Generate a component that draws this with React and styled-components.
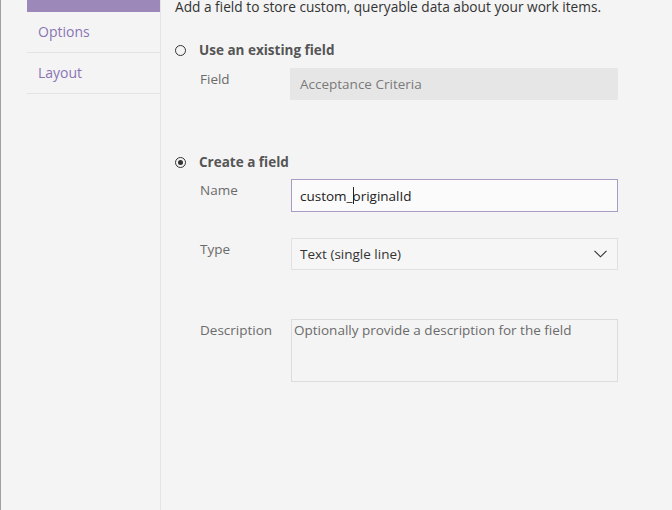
import React from "react";
import styled, {createGlobalStyle} from "styled-components";

const GlobalStyle = createGlobalStyle`
    html, body {
        margin: 0;
        padding: 0;
        background: #f4f4f4;
    }
    body {
        font-family: "Open Sans", "Noto Sans", sans-serif;
        font-size: 13px;
        color: #333333;
    }
`;

const navItems = [
    {label: "Fields", active: true},
    {label: "Options"},
    {label: "Layout"},
];

const ChevronDown = () => (
    <svg width="13" height="8" viewBox="0 0 13 8">
        <polyline points="0.5,0.8 6.5,6.8 12.5,0.8" fill="none" stroke="#333333" strokeWidth="1.1"/>
    </svg>
);

const App = () => {
    return <Page>
        <GlobalStyle/>
        <Nav>
            <NavList>
                {navItems.map((item) => (
                    <NavItem key={item.label} $active={item.active}>{item.label}</NavItem>
                ))}
            </NavList>
        </Nav>
        <Content>
            <Intro>Add a field to store custom, queryable data about your work items.</Intro>

            <RadioRow $gap={23}>
                <Radio/>
                <RadioLabel>Use an existing field</RadioLabel>
            </RadioRow>
            <FieldRow $gap={8}>
                <Label>Field</Label>
                <DisabledBox>Acceptance Criteria</DisabledBox>
            </FieldRow>

            <RadioRow $gap={52}>
                <Radio $checked/>
                <RadioLabel>Create a field</RadioLabel>
            </RadioRow>
            <FieldRow $gap={7}>
                <Label>Name</Label>
                <TextBox>custom_<Caret/>originalId</TextBox>
            </FieldRow>
            <FieldRow $gap={26}>
                <Label>Type</Label>
                <Select>
                    <span>Text (single line)</span>
                    <ChevronDown/>
                </Select>
            </FieldRow>
            <FieldRow $gap={49}>
                <Label>Description</Label>
                <TextArea placeholder="Optionally provide a description for the field"/>
            </FieldRow>
        </Content>
    </Page>
}

const Page = styled.div`
    display: flex;
    height: 510px;
    overflow: hidden;
    border-left: 1px solid #a0a0a0;
    box-sizing: border-box;
`;

const Nav = styled.div`
    width: 160px;
    flex-shrink: 0;
    padding-left: 26px;
    box-sizing: border-box;
    border-right: 1px solid #e4e4e4;
`;

const NavList = styled.div`
    margin-top: -29px;
    display: flex;
    flex-direction: column;
`;

const NavItem = styled.div`
    height: 40px;
    line-height: 40px;
    padding-left: 11px;
    font-size: 14px;
    color: ${(p) => (p.$active ? "#ffffff" : "#8a75b4")};
    background: ${(p) => (p.$active ? "#9c89b9" : "transparent")};
    border-bottom: 1px solid ${(p) => (p.$active ? "#9c89b9" : "#e3e3e3")};
`;

const Content = styled.div`
    flex: 1;
    padding-left: 14px;
    display: flex;
    flex-direction: column;
`;

const Intro = styled.div`
    margin-top: -3px;
    line-height: 20px;
    font-size: 13.7px;
    color: #333333;
`;

const RadioRow = styled.div`
    margin-top: ${(p) => p.$gap}px;
    height: 20px;
    display: flex;
    align-items: center;
    gap: 13px;
`;

const Radio = styled.span`
    width: 11px;
    height: 11px;
    border-radius: 50%;
    border: 1.4px solid #333333;
    box-sizing: border-box;
    display: flex;
    align-items: center;
    justify-content: center;
    &::after {
        content: "";
        display: ${(p) => (p.$checked ? "block" : "none")};
        width: 5px;
        height: 5px;
        border-radius: 50%;
        background: #333333;
    }
`;

const RadioLabel = styled.span`
    font-weight: 700;
    font-size: 13.5px;
    color: #555555;
`;

const FieldRow = styled.div`
    margin-top: ${(p) => p.$gap}px;
    display: flex;
    align-items: flex-start;
    padding-left: 25px;
`;

const Label = styled.div`
    width: 90px;
    flex-shrink: 0;
    padding-top: 1px;
    line-height: 20px;
    font-size: 13.5px;
    color: #6b6b6b;
`;

const BoxBase = styled.div`
    width: 328px;
    height: 32px;
    box-sizing: border-box;
    display: flex;
    align-items: center;
    padding: 0 9px;
    font-size: 13.5px;
`;

const DisabledBox = styled(BoxBase)`
    background: #e6e6e6;
    color: #7a7a7a;
    padding-left: 10px;
`;

const TextBox = styled(BoxBase)`
    height: 33px;
    margin-left: 1px;
    width: 327px;
    background: #fbfbfb;
    border: 1px solid #a99cc4;
    padding-left: 8px;
    color: #222222;
    white-space: pre;
`;

const Caret = styled.span`
    display: inline-block;
    width: 1px;
    height: 17px;
    margin-right: -1px;
    background: #222222;
`;

const Select = styled(BoxBase)`
    margin-left: 1px;
    width: 327px;
    background: #f6f6f6;
    border: 1px solid #e1e1e1;
    padding-left: 8px;
    padding-right: 10px;
    justify-content: space-between;
    color: #333333;
`;

const TextArea = styled.textarea`
    width: 327px;
    height: 63px;
    margin: 0 0 0 1px;
    box-sizing: border-box;
    resize: none;
    background: #f4f4f4;
    border: 1px solid #dcdcdc;
    padding: 0 2px;
    font-family: "Open Sans", "Noto Sans", sans-serif;
    font-size: 13.5px;
    line-height: 20px;
    outline: none;
    &::placeholder {
        color: #6b6b6b;
        opacity: 1;
    }
`;

export default App
